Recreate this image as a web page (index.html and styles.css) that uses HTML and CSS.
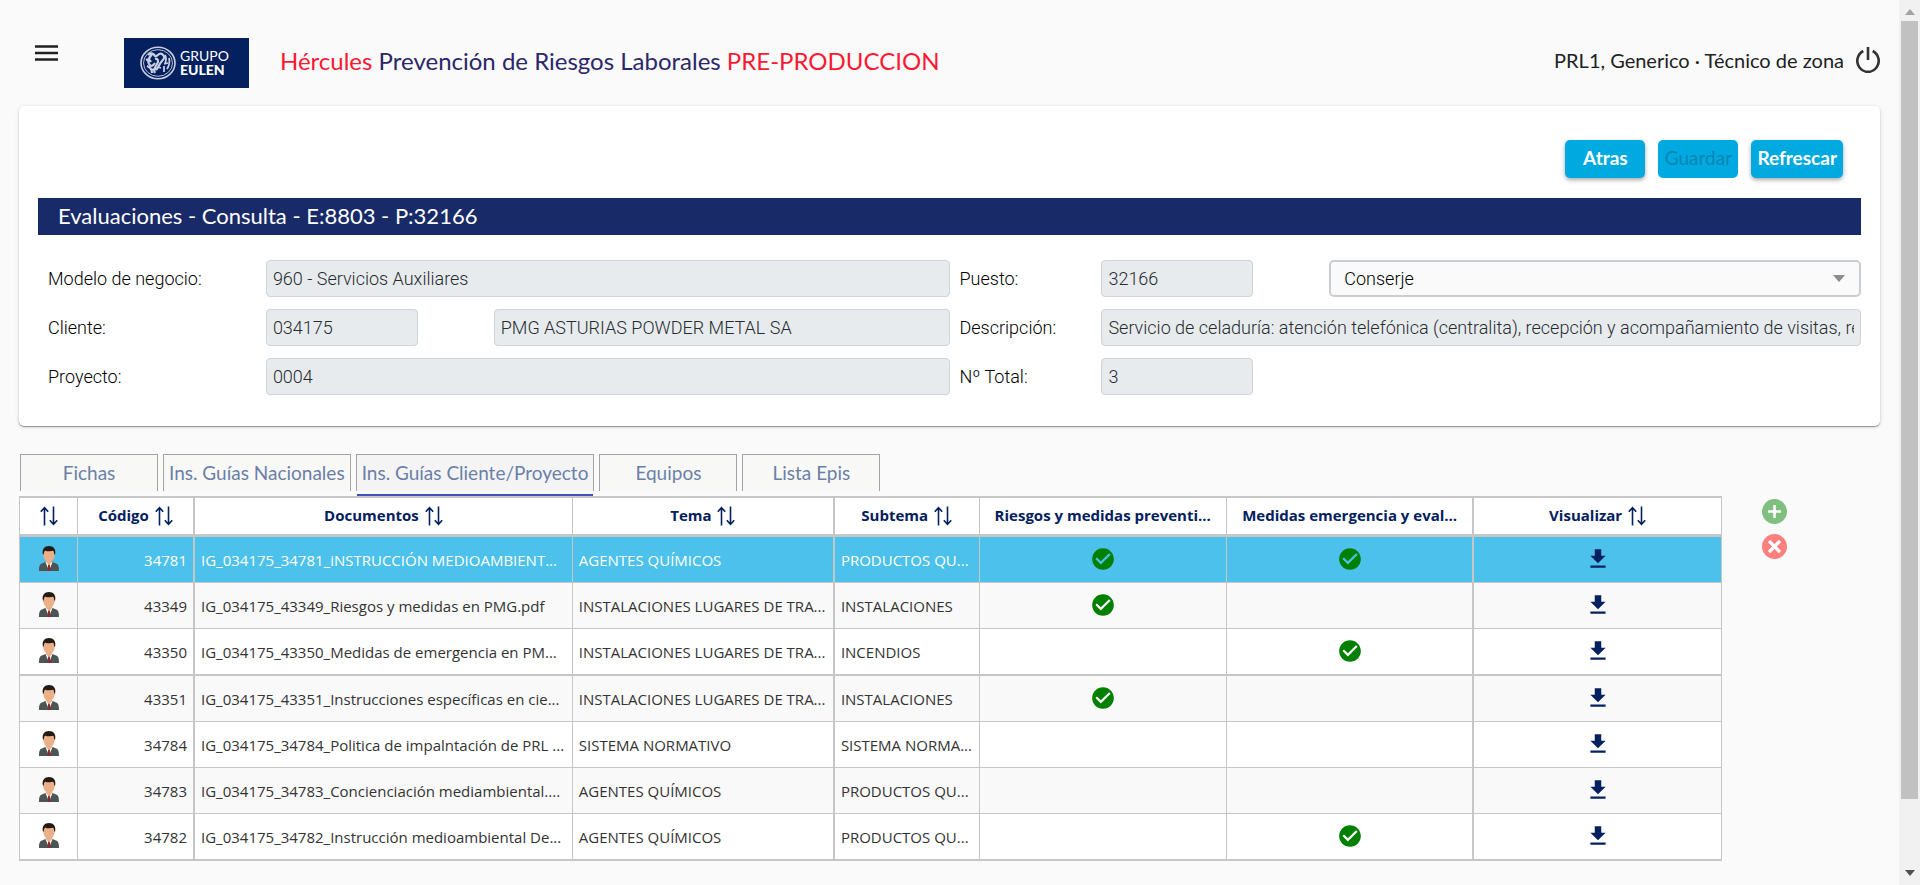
FILE: index.html
```html
<!DOCTYPE html>
<html lang="es">
<head>
<meta charset="utf-8">
<title>Hércules Prevención de Riesgos Laborales</title>
<link rel="stylesheet" href="styles.css">
</head>
<body>
<svg class="sprite" aria-hidden="true">
  <symbol id="i-sort" viewBox="0 0 18 20"><path d="M4.500 19.500V2M.8 5.800 4.500 1.600l3.700 4.200M13.500.5V18M9.800 14.200l3.700 4.200 3.700-4.200" fill="none" stroke="currentColor" stroke-width="1.600"/></symbol>
  <symbol id="i-check" viewBox="0 0 24 24"><path d="M12 2C6.480 2 2 6.480 2 12s4.480 10 10 10 10-4.480 10-10S17.520 2 12 2zm-2 15-5-5 1.410-1.410L10 14.170l7.590-7.590L19 8l-9 9z" fill="currentColor"/></symbol>
  <symbol id="i-down" viewBox="0 0 24 24"><path d="M19 9h-4V3H9v6H5l7 7 7-7zM5 18v2h14v-2H5z" fill="currentColor"/></symbol>
  <symbol id="i-person" viewBox="0 0 20 25">
    <path d="M0 25c0-5 .8-6.800 3-7.500l4.500-2h5l4.500 2c2.200.7 3 2.500 3 7.500z" fill="#4b5654"/>
    <path d="M6.500 16 10 25l3.500-9z" fill="#fff"/>
    <path d="M9.200 18h1.600l.9 7H8.300z" fill="#8b2a35"/>
    <path d="M7.500 13h5v3.500L10 19.500l-2.500-3z" fill="#e9ad84"/>
    <path d="M4 7c0-4 2.500-6 6-6s6 2 6 6c0 5-3 9.500-6 9.500S4 12 4 7z" fill="#ebb087"/>
    <path d="M3.900 8.500C2.800 3 5.500 0 10 0s7.200 3 6.100 8.500h-.9c0-2-.4-3-1.200-3.700-2.500.8-6 .6-7.800-.4-.9.800-1.400 2-1.400 4.100z" fill="#241c14"/>
  </symbol>
</svg>

<div class="page">
  <header class="top">
    <button class="icon-btn menu" aria-label="Menú"><svg viewBox="0 0 23 16"><path d="M0 1.500h23M0 8h23M0 14.500h23" stroke="#212121" stroke-width="2.600"/></svg></button>
    <div class="logo">
      <svg viewBox="0 0 36 34" aria-hidden="true">
        <g fill="none" stroke="#c8cfe0">
          <ellipse cx="18" cy="17" rx="17" ry="15.800" stroke-width="1.600"/>
          <ellipse cx="18" cy="17" rx="14.500" ry="13.300" stroke-width=".9"/>
          <path d="M8 9c3-3 6-1 7 1s4-4 7-2 3 4 0 7-3 6-6 9M12 8c-3 4-5 7-3 10s4 2 6-1M7 20c3 1 5 3 5 7M15 13c3-1 4 2 2 5s-4 6-2 9M6 14c2-1 4 0 5 2M10 23l5 1" stroke-width="2.200"/>
          <path d="M25 9c2 3 1 6 0 9M29 12c1 4 0 8-2 11M24 20v6M28 17l-4 1M18 21l3 1" stroke-width="1.800"/>
        </g>
      </svg>
      <div class="logo-text"><span>GRUPO</span><strong>EULEN</strong></div>
    </div>
    <h1 class="title"><em>Hércules</em> Prevención de Riesgos Laborales <em>PRE-PRODUCCION</em></h1>
    <div class="user">PRL1, Generico · Técnico de zona
      <button class="icon-btn power" aria-label="Cerrar sesión"><svg viewBox="0 0 24 26"><path d="M12 0v13M7.300 4A10.700 11 0 1 0 16.700 4" fill="none" stroke="#333" stroke-width="2.600"/></svg></button>
    </div>
  </header>

  <main>
    <section class="card">
      <div class="actions">
        <button class="btn">Atras</button>
        <button class="btn" disabled>Guardar</button>
        <button class="btn">Refrescar</button>
      </div>
      <h2 class="bar">Evaluaciones - Consulta - E:8803 - P:32166</h2>
      <form class="form">
        <label class="c3" for="modelo">Modelo de negocio:</label>
        <input class="c9" id="modelo" value="960 - Servicios Auxiliares" disabled>
        <label class="c2" for="puesto">Puesto:</label>
        <input class="c2" id="puesto" value="32166" disabled>
        <div class="select c7 skip1">
          <select id="puesto-nombre" aria-label="Nombre del puesto"><option>Conserje</option></select>
        </div>
        <label class="c3" for="cliente">Cliente:</label>
        <input class="c2" id="cliente" value="034175" disabled>
        <input class="c6 skip1" value="PMG ASTURIAS POWDER METAL SA" aria-label="Nombre del cliente" disabled>
        <label class="c2" for="desc">Descripción:</label>
        <input class="c10" id="desc" value="Servicio de celaduría: atención telefónica (centralita), recepción y acompañamiento de visitas, recepción" disabled>
        <label class="c3" for="proyecto">Proyecto:</label>
        <input class="c9" id="proyecto" value="0004" disabled>
        <label class="c2" for="total">Nº Total:</label>
        <input class="c2" id="total" value="3" disabled>
      </form>
    </section>

    <nav class="tabs" role="tablist">
      <button role="tab">Fichas</button>
      <button role="tab">Ins. Guías Nacionales</button>
      <button role="tab" class="active" aria-selected="true">Ins. Guías Cliente/Proyecto</button>
      <button role="tab">Equipos</button>
      <button role="tab">Lista Epis</button>
    </nav>

    <div class="content">
      <table class="grid">
        <colgroup><col class="w-icon"><col class="w-code"><col class="w-doc"><col class="w-tema"><col class="w-sub"><col class="w-flag"><col class="w-flag"><col class="w-flag"></colgroup>
        <thead>
          <tr>
            <th><svg class="sort"><use href="#i-sort"/></svg></th>
            <th class="thick">Código <svg class="sort"><use href="#i-sort"/></svg></th>
            <th>Documentos <svg class="sort"><use href="#i-sort"/></svg></th>
            <th class="thick">Tema <svg class="sort"><use href="#i-sort"/></svg></th>
            <th>Subtema <svg class="sort"><use href="#i-sort"/></svg></th>
            <th>Riesgos y medidas preventi...</th>
            <th class="thick">Medidas emergencia y eval...</th>
            <th>Visualizar <svg class="sort"><use href="#i-sort"/></svg></th>
          </tr>
        </thead>
        <tbody>
          <tr class="selected"><td><svg class="person"><use href="#i-person"/></svg></td><td class="thick num">34781</td><td>IG_034175_34781_iNSTRUCCIÓN MEDIOAMBIENT...</td><td class="thick">AGENTES QUÍMICOS</td><td>PRODUCTOS QU...</td><td><svg class="check"><use href="#i-check"/></svg></td><td class="thick"><svg class="check"><use href="#i-check"/></svg></td><td><svg class="down"><use href="#i-down"/></svg></td></tr>
          <tr><td><svg class="person"><use href="#i-person"/></svg></td><td class="thick num">43349</td><td>IG_034175_43349_Riesgos y medidas en PMG.pdf</td><td class="thick">INSTALACIONES LUGARES DE TRA...</td><td>INSTALACIONES</td><td><svg class="check"><use href="#i-check"/></svg></td><td class="thick"></td><td><svg class="down"><use href="#i-down"/></svg></td></tr>
          <tr class="heavy"><td><svg class="person"><use href="#i-person"/></svg></td><td class="thick num">43350</td><td>IG_034175_43350_Medidas de emergencia en PM...</td><td class="thick">INSTALACIONES LUGARES DE TRA...</td><td>INCENDIOS</td><td></td><td class="thick"><svg class="check"><use href="#i-check"/></svg></td><td><svg class="down"><use href="#i-down"/></svg></td></tr>
          <tr><td><svg class="person"><use href="#i-person"/></svg></td><td class="thick num">43351</td><td>IG_034175_43351_Instrucciones específicas en cie...</td><td class="thick">INSTALACIONES LUGARES DE TRA...</td><td>INSTALACIONES</td><td><svg class="check"><use href="#i-check"/></svg></td><td class="thick"></td><td><svg class="down"><use href="#i-down"/></svg></td></tr>
          <tr><td><svg class="person"><use href="#i-person"/></svg></td><td class="thick num">34784</td><td>IG_034175_34784_Politica de impalntación de PRL ...</td><td class="thick">SISTEMA NORMATIVO</td><td>SISTEMA NORMA...</td><td></td><td class="thick"></td><td><svg class="down"><use href="#i-down"/></svg></td></tr>
          <tr><td><svg class="person"><use href="#i-person"/></svg></td><td class="thick num">34783</td><td>IG_034175_34783_Concienciación mediambiental....</td><td class="thick">AGENTES QUÍMICOS</td><td>PRODUCTOS QU...</td><td></td><td class="thick"></td><td><svg class="down"><use href="#i-down"/></svg></td></tr>
          <tr class="heavy"><td><svg class="person"><use href="#i-person"/></svg></td><td class="thick num">34782</td><td>IG_034175_34782_Instrucción medioambiental De...</td><td class="thick">AGENTES QUÍMICOS</td><td>PRODUCTOS QU...</td><td></td><td class="thick"><svg class="check"><use href="#i-check"/></svg></td><td><svg class="down"><use href="#i-down"/></svg></td></tr>
        </tbody>
      </table>
      <div class="side">
        <button class="icon-btn" aria-label="Añadir"><svg viewBox="0 0 25 25"><circle cx="12.500" cy="12.500" r="12.500" fill="#7fbf7f"/><path d="M12.500 6v13M6 12.500h13" stroke="#fff" stroke-width="2.600"/></svg></button>
        <button class="icon-btn" aria-label="Eliminar"><svg viewBox="0 0 25 25"><circle cx="12.500" cy="12.500" r="12.500" fill="#ff7f7f"/><path d="m7 7 11 11m0-11-11 11" stroke="#fff" stroke-width="3.200"/></svg></button>
      </div>
    </div>
  </main>
</div>

<div class="scrollbar" aria-hidden="true">
  <svg class="arrow" viewBox="0 0 10 6"><path d="M0 6 5 0l5 6z" fill="#a3a3a3"/></svg>
  <div class="track"><div class="thumb"></div></div>
  <svg class="arrow" viewBox="0 0 10 6"><path d="M0 0l5 6 5-6z" fill="#505050"/></svg>
</div>
</body>
</html>
```

FILE: styles.css
```css
* { box-sizing: border-box; }

body {
  margin: 0;
  display: flex;
  background: #fafafa;
  color: #212121;
  font-family: Lato, sans-serif;
  font-size: 18px;
}

button, input, select { font: inherit; }

.sprite { position: absolute; width: 0; height: 0; }

.page { flex: 1; min-width: 0; padding: 0 19px; }

.icon-btn { display: block; padding: 0; border: 0; background: none; }
.icon-btn svg { display: block; width: 100%; }

/* Header */
.top {
  display: flex;
  align-items: center;
  height: 106px;
  padding: 20px 0 0 16px;
}
.menu { width: 23px; margin-bottom: 20px; }
.logo {
  display: flex;
  align-items: center;
  gap: 4px;
  width: 125px;
  height: 50px;
  margin: 0 31px 0 66px;
  padding-left: 16px;
  background: #04205f;
  color: #fff;
}
.logo svg { width: 36px; height: 34px; }
.logo-text { display: grid; font-size: 14px; line-height: 14px; }
.logo-text strong { font-weight: 900; }
.title, .user { margin-bottom: 6px; }
.title { margin-top: 0; font-size: 24px; font-weight: 400; color: #2b2768; }
.title em { font-style: normal; color: #fb1933; }
.user {
  display: flex;
  align-items: center;
  gap: 12px;
  margin-left: auto;
  font-size: 20px;
}
.power { width: 24px; }

/* Card */
.card {
  padding: 34px 19px 31px;
  border-radius: 5px;
  background: #fff;
  box-shadow: 0 1px 1px rgba(0, 0, 0, .35), 0 1px 4px rgba(0, 0, 0, .15);
}
.actions {
  display: flex;
  justify-content: flex-end;
  gap: 13px;
  padding-right: 18px;
}
.btn {
  min-width: 80px;
  height: 38px;
  padding: 0 6px 4px;
  border: 0;
  border-radius: 5px;
  background: #00a9e0;
  color: #fff;
  font-size: 19px;
  font-weight: 700;
  box-shadow: 0 2px 4px rgba(0, 0, 0, .35);
}
.btn:disabled { color: #0785b3; font-weight: 400; box-shadow: none; }
.bar {
  margin: 20px 0 25px;
  padding: 0 20px 2px;
  background: #182b68;
  color: #fff;
  font-size: 22px;
  font-weight: 400;
  line-height: 35px;
}
.form {
  display: grid;
  grid-template-columns: repeat(24, minmax(0, 1fr));
  row-gap: 12px;
  align-items: center;
  color: #000;
  font-family: Roboto, sans-serif;
  font-weight: 300;
}
.form label { padding-left: 10px; }
.form input {
  width: 100%;
  height: 37px;
  padding: 0 6px;
  border: 1px solid #ced4da;
  border-radius: 4px;
  background: #e8ebee;
  color: #262b30;
}
.c2 { grid-column-end: span 2; }
.c3 { grid-column-end: span 3; }
.c6 { grid-column-end: span 6; }
.c7 { grid-column-end: span 7; }
.c9 { grid-column-end: span 9; }
.c10 { grid-column-end: span 10; }
.c6.skip1 { grid-column-start: 7; }
.c7.skip1 { grid-column-start: 18; }
.select {
  display: flex;
  align-items: center;
  height: 37px;
  padding-right: 14px;
  border: 2px solid #c9cdd1;
  border-radius: 5px;
  background: #fafafa;
}
.select::after {
  content: "";
  border: 6px solid transparent;
  border-top: 7px solid #8c8c8c;
  border-bottom: 0;
}
.select select {
  flex: 1;
  height: 33px;
  padding: 0 13px;
  border: 0;
  background: none;
  color: #000;
  appearance: none;
}

/* Tabs */
.tabs { display: flex; gap: 5px; padding: 28px 1px 0; }
.tabs button {
  position: relative;
  min-width: 138px;
  height: 37px;
  padding: 0 5px 2px;
  border: 1px solid #a2a4a4;
  border-bottom: 0;
  background: #f8f8f6;
  color: #6b7fa8;
  font-size: 19px;
}
.tabs .active { background: #f4f4f4; }
.tabs .active::after {
  content: "";
  position: absolute;
  left: 0;
  right: 0;
  bottom: -5px;
  height: 2px;
  background: #3f51b5;
}

/* Table */
.content { display: flex; padding-top: 5px; }
.grid {
  width: 91.500%;
  table-layout: fixed;
  border: solid #c6c6c6;
  border-width: 2px 0 0 1px;
  border-spacing: 0;
  background: #fff;
  color: #333;
  font-family: "Open Sans", sans-serif;
  font-size: 15px;
}
.w-icon { width: 58px; }
.w-code { width: 117px; }
.w-doc { width: 22.200%; }
.w-tema { width: 15.400%; }
.w-sub { width: 8.500%; }
.grid th, .grid td {
  padding: 0 6px;
  border: 0 solid #c6c6c6;
  border-width: 0 1px 1px 0;
  overflow: hidden;
  white-space: nowrap;
}
.grid .thick { border-right-width: 2px; }
.grid th { height: 39px; padding-bottom: 3px; border-bottom-width: 3px; color: #04205f; font-weight: 700; }
.grid td { height: 46px; }
.grid .heavy td { height: 47px; border-bottom-width: 2px; }
.grid tbody tr:nth-child(even) { background: #f9f9f9; }
.grid tbody tr.selected { background: #4bc1eb; color: #fff; }
.grid .num { text-align: right; }
.grid td > svg { display: block; margin: 0 auto 2px; }
.sort { width: 18px; height: 20px; margin: -4px 0 -4px 2px; vertical-align: middle; }
th:first-child .sort { margin-left: 0; }
.person { width: 20px; height: 25px; }
.check { width: 26px; height: 26px; color: #008000; }
.down { width: 26px; height: 26px; color: #04205f; }
.side { display: grid; gap: 10px; align-content: start; width: 25px; margin: 3px 0 0 40px; }

/* Scrollbar */
.scrollbar {
  position: sticky;
  top: 0;
  display: flex;
  flex-direction: column;
  align-items: center;
  justify-content: space-between;
  width: 21px;
  height: 100vh;
  padding: 9px 2px;
  background: #f1f1f1;
}
.arrow { width: 10px; height: 6px; }
.track { flex: 1; width: 17px; margin: 6px 0 0; }
.thumb { height: 91.600%; background: #c1c1c1; }
```
